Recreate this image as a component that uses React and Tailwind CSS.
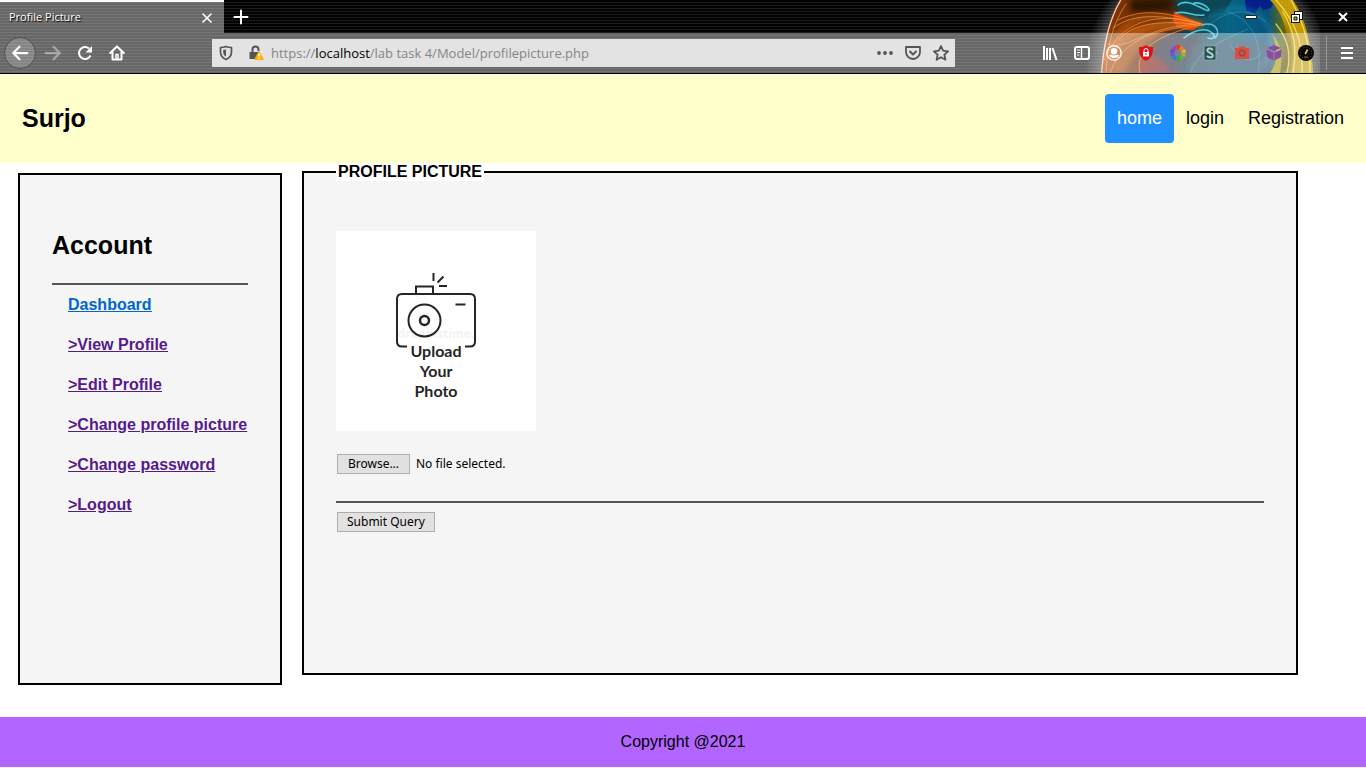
import { useRef, useState } from "react";

function ThemeArt() {
  return (
    <svg className="pointer-events-none absolute top-0 right-[46px]" width="240" height="73" viewBox="0 0 240 73" aria-hidden="true">
      <defs>
        <clipPath id="globe"><path d="M40 0C28 20 23 45 21 73H233C231 44 226 20 213 0Z" /></clipPath>
        <linearGradient id="base" x1="0" x2="1">
          <stop offset="0" stopColor="#a04406" />
          <stop offset="0.2" stopColor="#733006" />
          <stop offset="0.37" stopColor="#4a2208" />
          <stop offset="0.43" stopColor="#12404f" />
          <stop offset="0.62" stopColor="#086483" />
          <stop offset="0.78" stopColor="#07527c" />
          <stop offset="0.86" stopColor="#6f7008" />
          <stop offset="1" stopColor="#b8900c" />
        </linearGradient>
        <radialGradient id="glow">
          <stop offset="0.82" stopColor="#ffffff" stopOpacity="0.6" />
          <stop offset="1" stopColor="#ffffff" stopOpacity="0" />
        </radialGradient>
        <filter id="soft" x="-20%" y="-20%" width="140%" height="140%"><feGaussianBlur stdDeviation="2.5" /></filter>
      </defs>
      <ellipse cx="127" cy="65" rx="122" ry="112" fill="url(#glow)" opacity="0.6" />
      <g clipPath="url(#globe)">
        <rect width="240" height="73" fill="url(#base)" />
        <path d="M50 0h44l-8 10-34 2z" fill="#2c1203" filter="url(#soft)" />
        <path d="M96 0h56l-8 12-24 6-20-8z" fill="#0c4654" />
        <path d="M165 0h30l-4 8-8 2-3-4-5 7-9-3z" fill="#06208a" />
        <path d="M94 11c6 4 18 9 28 13l-10 7-14-3-5-7z" fill="#d83a08" />
        <path d="M24 62c12-30 40-45 98-38C92 30 60 36 44 73H22z" fill="#c55a08" opacity="0.6" filter="url(#soft)" />
        <path d="M86 33c20 0 26 6 36 1l-8 20-16 19H70c2-14 4-30 16-40z" fill="#2b2f40" filter="url(#soft)" />
        <path d="M60 60c12-8 24-4 30 13H58z" fill="#9c1410" opacity="0.7" filter="url(#soft)" />
        <path d="M112 44c26-10 60-8 80 2v27h-84z" fill="#31465e" opacity="0.7" filter="url(#soft)" />
        <path d="M190 0c18 18 20 45 14 73h32C232 42 226 18 213 0z" fill="#c29a0c" />
        <path d="M203 20c8 14 10 34 6 53h-10c8-16 8-34 4-53z" fill="#5a4705" filter="url(#soft)" />
        <path d="M192 34c12 12 10 26 8 39h-10c8-10 8-24 2-39z" fill="#a69a0e" />
        <g fill="none" strokeLinecap="round">
          <path d="M24 60C40 15 70 8 122 24M30 52C50 24 84 20 122 26" stroke="#ff7a10" strokeWidth="5" opacity="0.45" filter="url(#soft)" />
          <path d="M24 60C40 22 74 10 122 24M38 20c25-12 50-8 84 4M30 73c10-28 36-44 92-48M60 73c-6-24 18-38 60-48" stroke="#ff8420" opacity="0.8" />
          <path d="M33 28c21-16 52-13 87-4M46 4C32 24 27 48 26 73M39 40c12-15 36-20 75-16M28 44c20 8 34-18 92-20" stroke="#ffb469" strokeWidth="0.8" opacity="0.7" />
          <path d="M40 0C28 20 23 45 21 73" stroke="#ffc9b8" strokeWidth="2.5" />
          <path d="M98 5c8-7 20 2 28 5s-1-8-12-7M96 13c9-3 18 4 28 2M122 25c14-4 19 7 13 13M104 38c10-8 22-11 28-5 5 3 1 7-4 5" stroke="#4bc8da" strokeWidth="1.6" />
          <path d="M128 26c20-18 42-18 58-4M110 73c8-24 36-34 58-44M148 12c20 6 36 26 30 61M150 44c8 16 22 22 32 8" stroke="#3db3df" strokeWidth="0.8" opacity="0.55" />
          <path d="M130 16c26-14 48-8 58 10 6 16 2 30-6 40" stroke="#2aa9df" strokeWidth="3" opacity="0.4" filter="url(#soft)" />
          <path d="M196 0c22 24 27 46 26 73M203 12c12 20 14 38 10 61M211 0c14 26 19 45 19 73M196 24c11 14 16 28 11 49" stroke="#fff35a" strokeWidth="1.3" opacity="0.75" />
        </g>
      </g>
    </svg>
  );
}

function Icon({ children, size = 16 }) {
  return <svg width={size} height={size} viewBox="0 0 16 16" fill="none" stroke="currentColor" strokeWidth="2" strokeLinecap="round" strokeLinejoin="round" aria-hidden="true">{children}</svg>;
}

function ToolButton({ label, children, className = "" }) {
  return <button type="button" aria-label={label} className={`flex size-8 shrink-0 items-center justify-center text-white ${className}`}>{children}</button>;
}

function Tabs() {
  return (
    <div className="relative flex h-[33px] items-stretch text-white">
      <div className="flex w-56 items-center justify-between border-t-2 border-white bg-white/40 pr-[9px] pl-[9px]">
        <span className="font-['Open_Sans',sans-serif] text-[11px] font-medium text-shadow-[1px_1px_1px_#000]">Profile Picture</span>
        <button type="button" aria-label="Close tab" className="flex size-4 items-center justify-center">
          <Icon><path d="M4 4l8 8M12 4l-8 8" strokeWidth="1.6" /></Icon>
        </button>
      </div>
      <button type="button" aria-label="New tab" className="flex w-[34px] items-center justify-center">
        <Icon><path d="M8 1.500v13M1.500 8h13" /></Icon>
      </button>
      <div className="ml-auto flex">
        <button type="button" aria-label="Minimize" className="flex w-[46px] items-center justify-center">
          <svg width="12" height="4" aria-hidden="true"><path d="M.5.5h11v3H.5z" fill="#fff" stroke="#222" /></svg>
        </button>
        <button type="button" aria-label="Restore" className="flex w-[46px] items-center justify-center">
          <svg width="12" height="12" viewBox="0 0 12 12" aria-hidden="true">
            <path d="M3 0h9v9H9v3H0V3h3z" fill="#111" />
            <path d="M4 1h7v7H9V3H4z" fill="#fff" />
            <path d="M1 4h7v7H1z" fill="#fff" />
            <path d="M3 6h3v3H3z" fill="#e5a600" stroke="#111" />
          </svg>
        </button>
        <button type="button" aria-label="Close window" className="flex w-[46px] items-center justify-center">
          <Icon><path d="M4 4l8 8M12 4l-8 8" strokeLinecap="butt" /></Icon>
        </button>
      </div>
    </div>
  );
}

function AddressBar() {
  return (
    <div className="mr-[79px] ml-[79px] flex h-7 min-w-0 flex-1 items-center bg-[#e3e3e3] px-[6px] text-[#555]">
      <button type="button" aria-label="Tracking protection" className="flex size-4 items-center justify-center">
        <Icon><path d="M8 1.500c2 1 3.500 1 5.500 1V7c0 3.500-2 6-5.500 7.500C4.500 13 2.500 10.500 2.500 7V2.500c2 0 3.500 0 5.500-1z" strokeWidth="1.700" /><path d="M8 4.500v7C6 10.500 5.200 9 5.200 7V5z" fill="currentColor" stroke="none" /></Icon>
      </button>
      <button type="button" aria-label="Connection not secure" className="ml-[14px] flex size-4 items-center justify-center">
        <svg width="16" height="16" viewBox="0 0 16 16" aria-hidden="true"><path d="M4.500 8V4.500a3 3 0 0 1 6 0V6" fill="none" stroke="#555" strokeWidth="2" /><path d="M1.500 7h9v7h-9z" fill="#555" /><path d="M11 6.500l4.300 8H6.700z" fill="#ffb000" stroke="#ffb000" strokeLinejoin="round" /><path d="M11 8.500v3M11 12.500V14" stroke="#fff" strokeWidth="1.400" /></svg>
      </button>
      <div className="ml-[7px] min-w-0 flex-1 truncate pt-[2px] font-['Open_Sans',sans-serif] text-[13px] text-[#858585]">
        https://<span className="text-black">localhost</span>/lab task 4/Model/profilepicture.php
      </div>
      <div className="flex items-center gap-3">
        <button type="button" aria-label="Page actions" className="flex w-4 items-center justify-center"><Icon><g fill="currentColor" stroke="none"><circle cx="2" cy="8" r="1.900" /><circle cx="8" cy="8" r="1.900" /><circle cx="14" cy="8" r="1.900" /></g></Icon></button>
        <button type="button" aria-label="Save to Pocket"><Icon><path d="M1 2h14v5a7 7 0 0 1-14 0z" strokeWidth="1.800" /><path d="M5 6.500l3 3 3-3" strokeWidth="2" /></Icon></button>
        <button type="button" aria-label="Bookmark"><Icon><path d="M8 1l2.100 4.700 5 .6-3.700 3.400 1 5L8 12.200l-4.400 2.500 1-5L.9 6.300l5-.6z" strokeWidth="1.800" /></Icon></button>
      </div>
    </div>
  );
}

function Extensions() {
  const petals = ["#e63b32", "#ef7d22", "#e7b52b", "#c0a338", "#54b63e", "#2bb23d", "#3679d5", "#5362d5", "#6b48c7", "#a13fc9"];
  return (
    <div className="flex items-center pr-[3px]">
      <ToolButton label="Library"><svg width="16" height="16" viewBox="0 0 16 16" stroke="white" strokeWidth="2" aria-hidden="true"><path d="M2 1v14M5 3v12M8 3v12M10.500 3l4 12" /></svg></ToolButton>
      <ToolButton label="Sidebars"><Icon><rect x="1" y="2" width="14" height="12" rx="2" /><path d="M7.500 2v12" strokeWidth="1.500" /><path d="M3.500 5h2M3.500 7.500h2M3.500 10h1.500" strokeWidth="1" /></Icon></ToolButton>
      <ToolButton label="Account"><svg width="16" height="16" viewBox="0 0 16 16" fill="none" stroke="#fff" aria-hidden="true"><circle cx="8" cy="8" r="7.200" strokeWidth="1.300" /><circle cx="8" cy="6.200" r="3.200" fill="#fff" stroke="none" /><path d="M3 10.500c1-1 2-1 3-.5 1 .6 3 .6 4 0 1-.5 2-.5 3 .5-1.500 3.500-8.500 3.500-10 0z" fill="#fff" stroke="none" /></svg></ToolButton>
      <ToolButton label="Ad blocker"><svg width="16" height="16" viewBox="0 0 16 16" aria-hidden="true"><path d="M8 0c2 2 4.500 2 7 2 0 7-1 11-7 14C2 13 1 9 1 2c2.500 0 5 0 7-2z" fill="#df1019" /><path d="M5 7h6v4.500H5z" fill="#fff" /><path d="M6 7V5.500a2 2 0 0 1 4 0V7" fill="none" stroke="#fff" /><path d="M8 8v2" stroke="#df1019" /></svg></ToolButton>
      <ToolButton label="Color tools"><svg width="16" height="16" viewBox="0 0 16 16" aria-hidden="true">{petals.map((color, i) => <path key={color} d="M5.900.5q2.100-1 4.200 0L8.900 4.500H7.100z" fill={color} transform={`rotate(${i * 36} 8 8)`} />)}</svg></ToolButton>
      <ToolButton label="Stylus"><svg width="16" height="16" viewBox="0 0 16 16" fill="none" aria-hidden="true"><path d="M2 .8h12v14.400H2z" fill="#285356" stroke="#86aeae" /><path d="M0 8h2M14 8h2" stroke="#86aeae" strokeWidth="2" /><path d="M10.800 5C9 2.800 5.300 3.300 5.300 5.600S10.800 8 10.800 10.400 6.800 13 5 10.800" stroke="#b4d3cf" strokeWidth="2" /></svg></ToolButton>
      <ToolButton label="Screenshot"><svg width="16" height="16" viewBox="0 0 16 16" aria-hidden="true"><path d="M5 1.500h6V3h4v11H1V3h4z" fill="#df4d40" /><circle cx="8" cy="8" r="2.700" fill="none" stroke="#85504c" strokeWidth="1.400" /></svg></ToolButton>
      <ToolButton label="Containers"><svg width="16" height="16" viewBox="0 0 16 16" aria-hidden="true"><path d="M8 0l7 3-7 3-7-3zM.5 4.500L7.500 7.500v8L1 12zM15.500 4.500l-7 3v8L15 12z" fill="#8d4ba2" /></svg></ToolButton>
      <ToolButton label="Speed test"><svg width="16" height="16" viewBox="0 0 16 16" fill="none" aria-hidden="true"><circle cx="8" cy="8" r="8" fill="#050505" /><circle cx="8" cy="8" r="5.800" stroke="#796e34" strokeDasharray="1 2" /><path d="M7.200 9L9.600 4.500" stroke="#f0c653" strokeWidth="1.600" /><path d="M6 12h4" stroke="#8a7230" /></svg></ToolButton>
      <div className="mx-1 h-[34px] w-px bg-white/30" />
      <ToolButton label="Open menu"><Icon><path d="M2 3h12M2 8h12M2 13h12" strokeLinecap="butt" /></Icon></ToolButton>
    </div>
  );
}

function Browser() {
  return (
    <div className="relative h-[74px] overflow-hidden border-b border-black bg-[repeating-linear-gradient(#020202_0px,#020202_2px,#1c1c1c_2px,#1c1c1c_3px)]">
      <ThemeArt />
      <Tabs />
      <div className="relative flex h-10 items-center bg-white/40 pl-1">
        <ToolButton label="Back" className="mr-px rounded-full border border-[#505050] bg-white/20"><Icon size={18}><path d="M14.500 8H2M7.500 2.500L2 8l5.500 5.500" /></Icon></ToolButton>
        <ToolButton label="Forward" className="opacity-40"><Icon size={18}><path d="M1.500 8H14M8.500 2.500L14 8l-5.500 5.500" /></Icon></ToolButton>
        <ToolButton label="Reload"><Icon><path d="M13.500 10.500A6 6 0 1 1 12 3.500" strokeLinecap="butt" /><path d="M15 1v6.500H8.500z" fill="currentColor" stroke="none" /></Icon></ToolButton>
        <ToolButton label="Home"><Icon><path d="M1.200 8L8 1.500 14.800 8M3.500 7v7.500h9V7" /><path d="M7 14V9.500h2V14" strokeWidth="1.500" /></Icon></ToolButton>
        <AddressBar />
        <Extensions />
      </div>
    </div>
  );
}

function UploadPicture() {
  return (
    <svg className="block" width="200" height="200" viewBox="0 0 200 200" role="img" aria-label="Upload Your Photo">
      <rect width="200" height="200" fill="#fff" />
      <text x="100" y="107" textAnchor="middle" fontFamily="Open Sans, sans-serif" fontSize="12" fontWeight="700" fill="#f3f3f3">dreamstime.</text>
      <g fill="none" stroke="#252525" strokeWidth="2">
        <path d="M71 115.500H66q-5 0-5-5V68q0-5 5-5h68q5 0 5 5v42.500q0 5-5 5h-5M80 62v-6.500h17V62" />
        <circle cx="88.500" cy="89.500" r="16" /><circle cx="88.500" cy="89.500" r="4.500" strokeWidth="2.500" />
        <path d="M119.500 73.500h10M97.500 42v8M101.500 51.500l6-6M103 55h8" />
      </g>
      <g fontFamily="Lato, sans-serif" fontSize="16" fontWeight="700" fill="#252525" textAnchor="middle">
        <text x="100" y="126">Upload</text><text x="100" y="146">Your</text><text x="100" y="166">Photo</text>
      </g>
    </svg>
  );
}

const formButton = "h-5 border border-[#adadad] bg-[#e1e1e1] px-[9px] leading-[18px]";

function ProfileForm() {
  const fileInput = useRef(null);
  const [fileName, setFileName] = useState("No file selected.");
  return (
    <form className="mr-[68px] min-w-0 flex-1" onSubmit={(event) => event.preventDefault()}>
      <fieldset className="min-h-[512px] border-2 border-black bg-[#f5f5f5] px-8 pb-8">
        <legend className="bg-white px-[2px] text-base leading-[18px] font-bold">PROFILE PICTURE</legend>
        <div className="pt-[50px]"><UploadPicture /></div>
        <div className="mt-[23px] flex items-center gap-[6px] pl-px font-['Noto_Sans',sans-serif] text-xs">
          <input ref={fileInput} id="picture" type="file" aria-label="Profile picture" className="sr-only" tabIndex={-1} onChange={(event) => setFileName(event.target.files[0]?.name ?? "No file selected.")} />
          <button type="button" className={`${formButton} min-w-[73px]`} onClick={() => fileInput.current.click()}>Browse...</button>
          <label htmlFor="picture">{fileName}</label>
        </div>
        <hr className="mt-[27px] mb-[9px] border-t-2 border-[#555]" />
        <div className="flex pl-px font-['Noto_Sans',sans-serif] text-xs"><button type="submit" className={formButton}>Submit Query</button></div>
      </fieldset>
    </form>
  );
}

const links = [">View Profile", ">Edit Profile", ">Change profile picture", ">Change password", ">Logout"];

export default function App() {
  return (
    <div className="flex min-h-screen flex-col bg-white font-['Liberation_Sans',sans-serif] text-black">
      <Browser />
      <header className="flex items-center justify-between bg-[#ffffcc] px-[10px] py-5">
        <a href="#" className="px-3 text-[25px] leading-[49px] font-bold">Surjo</a>
        <nav className="flex text-lg leading-[25px]">
          <a href="#" className="rounded bg-[#1e90ff] p-3 text-white">home</a>
          <a href="#" className="p-3">login</a>
          <a href="#" className="p-3">Registration</a>
        </nav>
      </header>
      <main className="flex items-start gap-5 pl-[18px]">
        <aside className="mt-[10px] min-h-[512px] w-[264px] shrink-0 border-2 border-black bg-[#f5f5f5] px-8 pt-[54px]">
          <h2 className="text-[25px] leading-8 font-bold">Account</h2>
          <hr className="mt-[22px] mb-[11px] border-t-2 border-[#555]" />
          <nav className="flex flex-col items-start gap-[22px] pl-4 text-base leading-[18px] font-bold whitespace-nowrap underline">
            <a href="#" className="text-[#0066cc]">Dashboard</a>
            {links.map((link) => <a key={link} href="#" className="text-[#551a8b]">{link}</a>)}
          </nav>
        </aside>
        <ProfileForm />
      </main>
      <footer className="mt-8 bg-[#b266ff] py-4 text-center text-base leading-[18px]">Copyright @2021</footer>
    </div>
  );
}
